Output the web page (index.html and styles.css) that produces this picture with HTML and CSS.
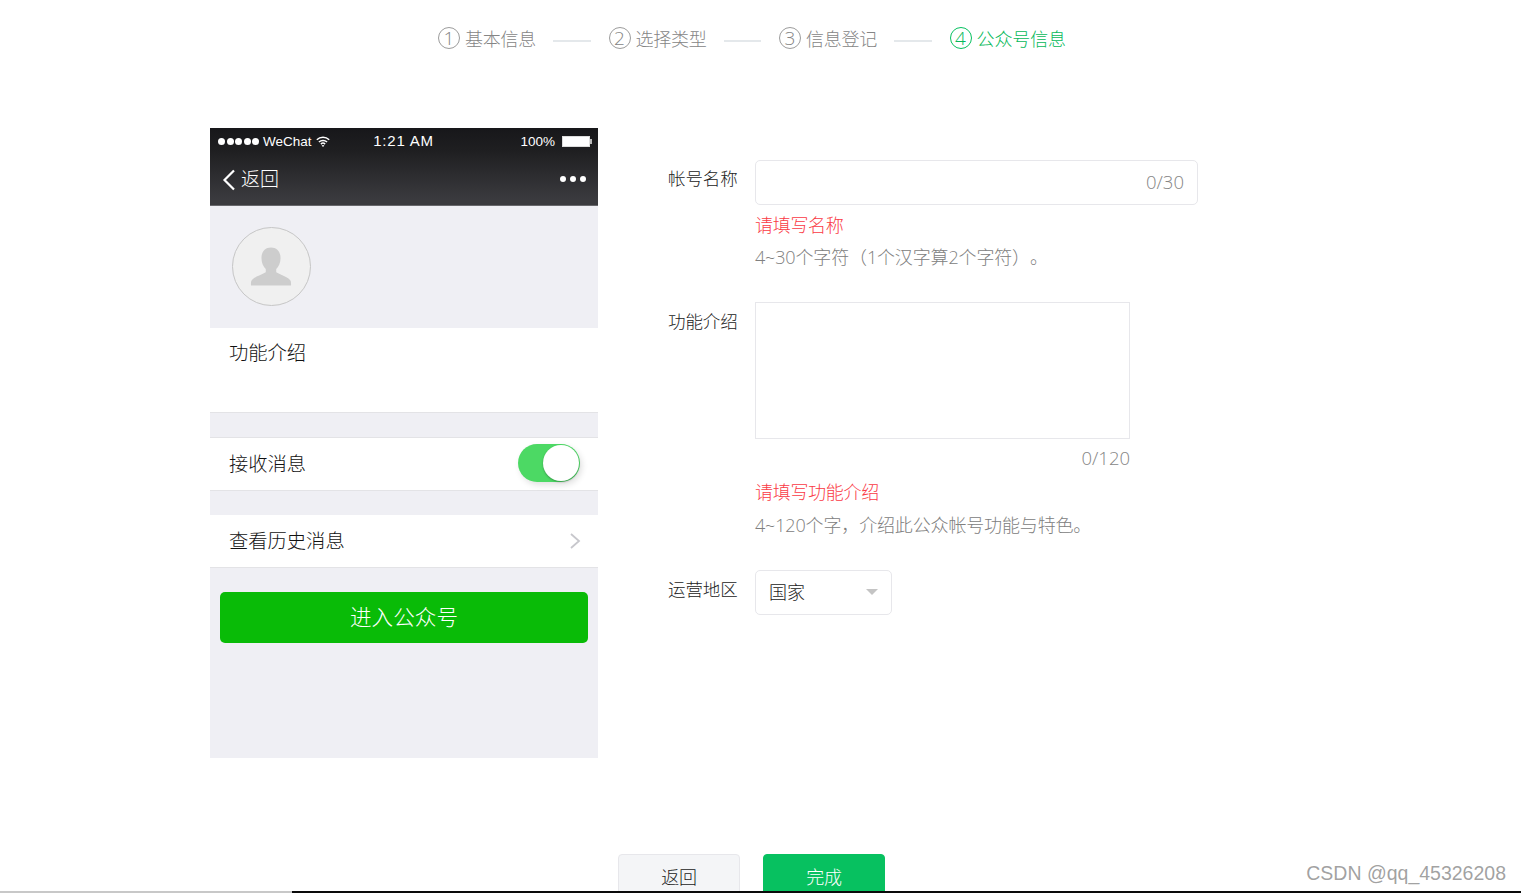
FILE: index.html
```html
<!DOCTYPE html>
<html lang="zh-CN">
<head>
<meta charset="utf-8">
<title>公众号信息</title>
<link rel="stylesheet" href="styles.css">
</head>
<body>
<div class="page">
  <nav class="steps">
    <div class="step"><span class="step-num">1</span><span>基本信息</span></div>
    <i class="step-line"></i>
    <div class="step"><span class="step-num">2</span><span>选择类型</span></div>
    <i class="step-line"></i>
    <div class="step"><span class="step-num">3</span><span>信息登记</span></div>
    <i class="step-line"></i>
    <div class="step step-active"><span class="step-num">4</span><span>公众号信息</span></div>
  </nav>

  <main class="main">
    <section class="phone">
      <header class="phone-head">
        <div class="status">
          <div class="status-left">
            <span class="signal"><i></i><i></i><i></i><i></i><i></i></span>
            <span>WeChat</span>
            <svg class="wifi" width="14" height="11" viewBox="0 0 14 11"><path d="M.8 3.800a9 9 0 0 1 12.400 0M2.900 6a6 6 0 0 1 8.200 0M4.900 8.100a3 3 0 0 1 4.200 0" fill="none" stroke="#fff" stroke-width="1.500"/><path d="M7 11 5.600 9.500a2.200 2.200 0 0 1 2.800 0z" fill="#fff"/></svg>
          </div>
          <span class="status-time">1:21 AM</span>
          <div class="status-right">
            <span>100%</span>
            <span class="battery"></span>
          </div>
        </div>
        <div class="navbar">
          <div class="back">
            <svg width="14" height="22" viewBox="0 0 14 22"><path d="M12 1.500 2.500 11l9.500 9.500" fill="none" stroke="#fff" stroke-width="2.200"/></svg>
            <span class="back-text">返回</span>
          </div>
          <span class="dots"><i></i><i></i><i></i></span>
        </div>
      </header>
      <div class="profile">
        <div class="avatar">
          <svg width="42" height="41" viewBox="0 0 44 42"><path d="M22 1c6 0 10 4.500 10 11 0 5-2 9-4.500 11.500v3.500c5 3 13 5 15 9 .6 1.300.5 3.500.5 5H1c0-1.500-.1-3.700.5-5 2-4 10-6 15-9v-3.500C14 21 12 17 12 12c0-6.500 4-11 10-11z" fill="#cdcdcd"/></svg>
        </div>
      </div>
      <div class="intro">功能介绍</div>
      <div class="row row-switch">
        <span class="lift">接收消息</span>
        <span class="switch"><i></i></span>
      </div>
      <div class="row row-link">
        <span class="lift">查看历史消息</span>
        <svg width="12" height="18" viewBox="0 0 12 18"><path d="M2 2l8 7-8 7" fill="none" stroke="#c7c7cc" stroke-width="1.800"/></svg>
      </div>
      <div class="enter-wrap"><div class="enter">进入公众号</div></div>
    </section>

    <form class="form">
      <div class="field field-name">
        <label class="label">帐号名称</label>
        <div class="control">
          <div class="input"><span class="count">0/30</span></div>
          <p class="error">请填写名称</p>
          <p class="hint">4~30个字符（1个汉字算2个字符）。</p>
        </div>
      </div>
      <div class="field field-intro">
        <label class="label">功能介绍</label>
        <div class="control">
          <div class="textarea"></div>
          <div class="count-below">0/120</div>
          <p class="error error-intro">请填写功能介绍</p>
          <p class="hint hint-intro">4~120个字，介绍此公众帐号功能与特色。</p>
        </div>
      </div>
      <div class="field field-region">
        <label class="label">运营地区</label>
        <div class="select"><span class="select-text">国家</span><i class="caret"></i></div>
      </div>
    </form>
  </main>

  <div class="actions">
    <button class="btn btn-back" type="button">返回</button>
    <button class="btn btn-done" type="button">完成</button>
  </div>
  <div class="strip"></div>
  <div class="watermark">CSDN @qq_45326208</div>
</div>
</body>
</html>
```
FILE: styles.css
```css
* { box-sizing: border-box; }
html, body { margin: 0; padding: 0; background: #fff; }
body { font-family: "Open Sans", "Noto Sans CJK SC", "Liberation Sans", sans-serif; font-weight: 300; color: #353535; text-spacing-trim: space-all; }
.page { position: relative; width: 1521px; height: 893px; overflow: hidden; }
p { margin: 0; }
.lift { padding-bottom: 2px; }
.back-text { padding-bottom: 4px; }
.select-text { padding-bottom: 4px; }

.steps { display: flex; align-items: center; height: 26px; margin: 26px 0 0 438px; font-size: 18px; color: #858585; }
.step { display: flex; align-items: center; gap: 5px; line-height: 26px; letter-spacing: -0.250px; white-space: nowrap; }
.step-num { display: flex; width: 22px; height: 22px; margin-top: -2px; align-items: center; justify-content: center; border: 1px solid #9c9c9c; border-radius: 50%; font-size: 19px; letter-spacing: 0; }
.step-line { width: 37.500px; height: 2px; margin: 3px 18px 0 17px; background: #e4e8eb; }
.step-active { color: #06b95a; letter-spacing: -0.100px; }
.step-active .step-num { border-color: #07c160; }

.main { display: flex; margin: 76px 0 0 210px; }
.phone { flex: none; width: 388px; height: 630px; background: #efeff4; }
.phone-head { height: 78px; background: linear-gradient(#17171a 0, #1f1f21 30%, #3a3a3e 92%, #3a3a3e 100%); border-bottom: 1px solid #67676b; color: #fff; }
.status { display: grid; grid-template-columns: 1fr auto 1fr; align-items: center; height: 26px; padding: 0 8px; font: 400 13.500px "Liberation Sans", sans-serif; }
.status-left { display: flex; align-items: center; gap: 4px; }
.signal { display: flex; gap: 1.500px; }
.signal i { width: 7px; height: 7px; border-radius: 50%; background: #fff; }
.status-time { padding: 0 1px 2px 0; font-size: 15px; letter-spacing: 0.800px; }
.status-right { display: flex; justify-content: flex-end; align-items: center; gap: 7px; }
.battery { position: relative; width: 28px; height: 11px; background: #fff; border: 1px solid #ddd; }
.battery::after { content: ""; position: absolute; right: -3px; top: 2px; width: 2px; height: 5px; background: #bbb; }
.navbar { display: flex; justify-content: space-between; align-items: center; height: 51px; padding: 0 12px; }
.back { display: flex; align-items: center; gap: 5px; font-size: 19px; }
.dots { display: flex; gap: 4px; margin-top: -2px; }
.dots i { width: 6px; height: 6px; border-radius: 50%; background: #fff; }

.profile { height: 122px; padding: 21px 0 0 22px; }
.avatar { display: flex; justify-content: center; align-items: flex-end; width: 79px; height: 79px; padding: 0 2px 18px 0; border: 1px solid #c6c6c6; border-radius: 50%; background: #f0f0f0; }
.intro { height: 85px; padding: 12px 19px; background: #fff; border-bottom: 1px solid #e3e3e6; font-size: 19.300px; line-height: 26px; color: #111; }
.row { display: flex; justify-content: space-between; align-items: center; background: #fff; font-size: 19.300px; color: #111; }
.row-switch { height: 54px; margin-top: 24px; padding: 0 18px 0 19px; border-top: 1px solid #e3e3e6; border-bottom: 1px solid #e3e3e6; }
.row-link { height: 53px; margin-top: 24px; padding: 0 17px 0 19px; border-bottom: 1px solid #e3e3e6; }
.switch { position: relative; width: 62px; height: 38px; margin-top: -2px; border-radius: 19px; background: #4cd964; box-shadow: 2px 3px 6px rgba(0,0,0,.12); }
.switch i { position: absolute; right: 1px; top: 1px; width: 36px; height: 36px; border-radius: 50%; background: #fff; box-shadow: 0 1px 2px rgba(0,0,0,.3); }
.enter-wrap { padding: 24px 10px 0; }
.enter { height: 51px; border-radius: 5px; background: #09bb07; color: #fff; text-align: center; font-size: 21.600px; line-height: 50px; }

.form { margin-left: 70px; font-size: 18px; }
.field { display: flex; }
.label { flex: none; width: 87px; padding-top: 5px; font-size: 17.500px; line-height: 26px; letter-spacing: -0.100px; color: #222; }
.control { flex: none; }
.field-name { margin-top: 32px; height: 142px; }
.field-intro { height: 268px; }
.field-intro .label { padding-top: 6px; }
.field-region .label { padding-top: 6px; }
.input { display: flex; justify-content: flex-end; align-items: center; width: 443px; height: 45px; padding: 0 13px 2px; border: 1px solid #e7e7eb; border-radius: 5px; }
.count, .count-below { color: #858585; font-size: 18.500px; }
.textarea { width: 375px; height: 137px; border: 1px solid #e7e7eb; }
.count-below { width: 375px; height: 38px; padding-top: 6px; line-height: 26px; text-align: right; }
.error { margin-top: 7px; color: #fa3a45; line-height: 26px; letter-spacing: -0.300px; }
.error-intro { margin-top: 2px; }
.hint { margin-top: 6px; color: #808080; line-height: 26px; letter-spacing: -0.150px; white-space: nowrap; }
.hint-intro { margin-top: 7px; }
.select { display: flex; justify-content: space-between; align-items: center; width: 137px; height: 45px; padding: 0 13px; border: 1px solid #e7e7eb; border-radius: 5px; color: #222; }
.caret { width: 0; height: 0; margin-top: -1px; border: 6px solid transparent; border-top: 6px solid #c4c4c4; border-bottom: 0; }

.actions { position: absolute; left: 618px; top: 854px; display: flex; gap: 23px; }
.btn { width: 122px; height: 60px; padding: 0 0 16px; border: 1px solid #e7e7eb; border-radius: 4px 4px 0 0; font: 300 18px "Noto Sans CJK SC", sans-serif; letter-spacing: -0.300px; }
.btn-back { background: #f4f5f7; color: #222; }
.btn-done { background: #07c160; border-color: #07c160; color: #fff; }
.strip { position: absolute; left: 0; right: 0; bottom: 0; height: 2px; background: linear-gradient(to right, #c8c8c8 0, #c8c8c8 292px, #0a0a0a 292px, #0a0a0a 100%); }
.watermark { position: absolute; right: 15px; top: 862px; font: 400 19.500px "Liberation Sans", sans-serif; color: rgba(120,120,120,.7); }
```
